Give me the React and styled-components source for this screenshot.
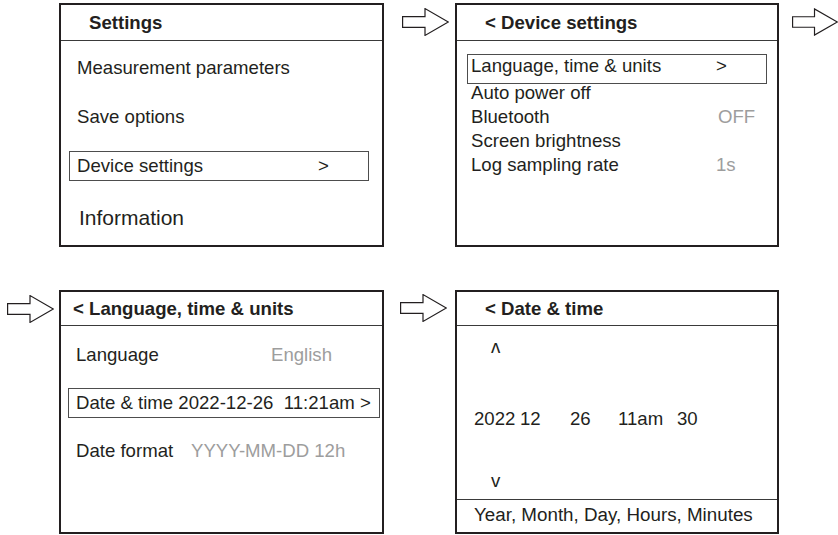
import React from "react";
import styled, { createGlobalStyle } from "styled-components";

const GlobalStyle = createGlobalStyle`
  html, body { margin: 0; padding: 0; background: #ffffff; }
  body {
    font-family: "Liberation Sans", Arial, Helvetica, sans-serif;
    color: #231f20;
  }
`;

const INK = "#231f20";
const GRAY = "#9d9d9d";

const Page = styled.main`
  width: 838px;
  height: 535px;
  box-sizing: border-box;
  padding-top: 3px;
  display: grid;
  grid-template-columns: 59px 325px 71px 324px 59px;
  grid-template-rows: 244px 244px;
  row-gap: 43px;
`;

const Blank = styled.div``;

const ArrowCell = styled.div`
  display: flex;
  align-items: flex-start;
  padding: ${(p) => p.$top}px 0 0 ${(p) => p.$left}px;
`;

const Panel = styled.section`
  display: flex;
  flex-direction: column;
  box-sizing: border-box;
  height: 100%;
  border: 2px solid ${INK};
`;

const Header = styled.header`
  box-sizing: border-box;
  height: ${(p) => p.$h}px;
  flex: none;
  display: flex;
  align-items: center;
  padding-left: ${(p) => p.$indent}px;
  border-bottom: 1px solid #3a3a3a;
  font-size: 18.6px;
  font-weight: bold;
`;

const MenuList = styled.div`
  display: flex;
  flex-direction: column;
  gap: ${(p) => p.$gap}px;
  padding: ${(p) => p.$pad};
`;

const MenuItem = styled.div`
  box-sizing: border-box;
  height: 30px;
  display: grid;
  grid-template-columns: ${(p) => (p.$label ? `${p.$label}px auto` : "auto")};
  align-items: center;
  padding-left: ${(p) => p.$pl ?? 7}px;
  margin-top: ${(p) => p.$mt ?? 0}px;
  border: 1px solid ${(p) => (p.$selected ? "#4d4d4d" : "transparent")};
  font-size: ${(p) => p.$size ?? 18.6}px;
  white-space: pre;
`;

const CompactItem = styled.div`
  box-sizing: border-box;
  height: ${(p) => (p.$selected ? 30 : 24)}px;
  line-height: ${(p) => (p.$selected ? 22 : 24)}px;
  display: grid;
  grid-template-columns: 245px auto;
  align-items: start;
  padding-left: ${(p) => (p.$selected ? 3 : 4)}px;
  margin-bottom: ${(p) => (p.$selected ? -3 : 0)}px;
  border: ${(p) => (p.$selected ? "1px solid #4d4d4d" : "none")};
  font-size: 18.6px;
  white-space: pre;
`;

const Value = styled.span`
  color: ${(p) => (p.$muted ? GRAY : INK)};
  margin-left: ${(p) => p.$shift ?? 0}px;
`;

const PickerBody = styled.div`
  flex: 1;
  display: flex;
  flex-direction: column;
  padding: 8.6px 0 0 17px;
  font-size: 18.6px;
  line-height: 24px;
`;

const Spin = styled.div`
  height: 24px;
  margin: ${(p) => p.$mt}px 0 0 17px;
`;

const DateRow = styled.div`
  height: 24px;
  margin-top: 48px;
  display: grid;
  grid-template-columns: 46px 50px 48px 59px auto;
  white-space: pre;
`;

const Footer = styled.footer`
  box-sizing: border-box;
  flex: none;
  height: 33px;
  display: flex;
  align-items: center;
  padding: 0 0 3px 17px;
  border-top: 1px solid #3a3a3a;
  font-size: 18.8px;
`;

const Arrow = () => (
  <svg width="47" height="28" viewBox="0 0 47 28">
    <polygon
      points="0.6,8.6 23,8.6 23,0.6 46.3,14 23,27.4 23,19.4 0.6,19.4"
      fill="#fff"
      stroke={INK}
      strokeWidth="1.2"
      strokeLinejoin="miter"
    />
  </svg>
);

export default function App() {
  return (
    <>
      <GlobalStyle />
      <Page>
        {/* Row 1 */}
        <Blank />
        <Panel>
          <Header $h={36} $indent={28}>Settings</Header>
          <MenuList $gap={19} $pad="12px 13px 0 8px">
            <MenuItem>Measurement parameters</MenuItem>
            <MenuItem>Save options</MenuItem>
            <MenuItem $selected $label={241}>
              <span>Device settings</span>
              <Value>&gt;</Value>
            </MenuItem>
            <MenuItem $size={21} $mt={3} $pl={9}>
              Information
            </MenuItem>
          </MenuList>
        </Panel>
        <ArrowCell $top={5} $left={18}>
          <Arrow />
        </ArrowCell>
        <Panel>
          <Header $h={36} $indent={28}>&lt; Device settings</Header>
          <MenuList $gap={0} $pad="13px 10px 0 10px">
            <CompactItem $selected>
              <span>Language, time &amp; units</span>
              <Value>&gt;</Value>
            </CompactItem>
            <CompactItem>
              <span>Auto power off</span>
            </CompactItem>
            <CompactItem>
              <span>Bluetooth</span>
              <Value $muted $shift={2}>OFF</Value>
            </CompactItem>
            <CompactItem>
              <span>Screen brightness</span>
            </CompactItem>
            <CompactItem>
              <span>Log sampling rate</span>
              <Value $muted>1s</Value>
            </CompactItem>
          </MenuList>
        </Panel>
        <ArrowCell $top={5} $left={13}>
          <Arrow />
        </ArrowCell>

        {/* Row 2 */}
        <ArrowCell $top={5} $left={7}>
          <Arrow />
        </ArrowCell>
        <Panel>
          <Header $h={34} $indent={12}>&lt; Language, time &amp; units</Header>
          <MenuList $gap={18} $pad="14px 2px 0 7px">
            <MenuItem $label={195}>
              <span>Language</span>
              <Value $muted>English</Value>
            </MenuItem>
            <MenuItem $selected>Date &amp; time 2022-12-26  11:21am &gt;</MenuItem>
            <MenuItem $label={115}>
              <span>Date format</span>
              <Value $muted>YYYY-MM-DD 12h</Value>
            </MenuItem>
          </MenuList>
        </Panel>
        <ArrowCell $top={4} $left={16}>
          <Arrow />
        </ArrowCell>
        <Panel>
          <Header $h={34} $indent={28}>&lt; Date &amp; time</Header>
          <PickerBody>
            <Spin $mt={0}>ʌ</Spin>
            <DateRow>
              <span>2022</span>
              <span>12</span>
              <span>26</span>
              <span>11am</span>
              <span>30</span>
            </DateRow>
            <Spin $mt={38}>v</Spin>
          </PickerBody>
          <Footer>Year, Month, Day, Hours, Minutes</Footer>
        </Panel>
        <Blank />
      </Page>
    </>
  );
}
